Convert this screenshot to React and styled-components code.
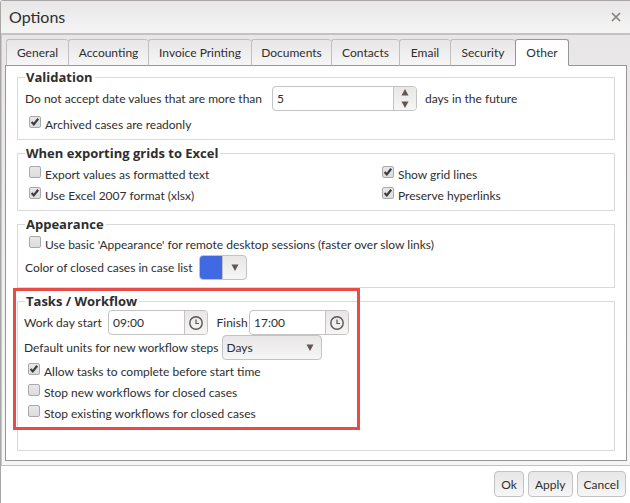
import React, { useState } from "react";
import styled, { createGlobalStyle } from "styled-components";

const tabs = [
  { name: "General", width: 62 },
  { name: "Accounting", width: 80 },
  { name: "Invoice Printing", width: 103 },
  { name: "Documents", width: 80 },
  { name: "Contacts", width: 68 },
  { name: "Email", width: 51 },
  { name: "Security", width: 65 },
  { name: "Other", width: 54 },
];

const Check = ({ label, checked }) => {
  const [on, setOn] = useState(!!checked);
  return (
    <CheckLabel>
      <CheckMark>
        <CheckInput
          type="checkbox"
          checked={on}
          onChange={(e) => setOn(e.target.checked)}
        />
        {on && (
          <svg width="12" height="12" viewBox="0 0 12 12" aria-hidden="true">
            <path d="M2.6 6 L4.8 8.4 L9.2 2.8" />
          </svg>
        )}
      </CheckMark>
      <span>{label}</span>
    </CheckLabel>
  );
};

const Arrow = ({ up }) => (
  <svg width="8" height="7" viewBox="0 0 8 7" fill="#645752" aria-hidden="true">
    <path d={up ? "M0.5 6.5 L4 0 L7.5 6.5 Z" : "M0.5 0.5 H7.5 L4 7 Z"} />
  </svg>
);

const Clock = () => (
  <svg width="16" height="16" viewBox="0 0 16 16" fill="none" aria-hidden="true">
    <circle cx="8" cy="8" r="6.2" stroke="#5c5350" strokeWidth="1.4" />
    <path d="M8 4.5 V8.5 H11" stroke="#5c5350" strokeWidth="1.2" />
  </svg>
);

const TimeField = ({ id, label, labelWidth, value }) => (
  <>
    <FieldLabel htmlFor={id} $width={labelWidth}>
      {label}
    </FieldLabel>
    <InputGroup $width={100}>
      <TextInput id={id} type="text" defaultValue={value} />
      <AddonButton type="button" aria-label={`Pick ${label} time`}>
        <Clock />
      </AddonButton>
    </InputGroup>
  </>
);

const App = () => {
  const [active, setActive] = useState("Other");
  const [days, setDays] = useState(5);
  return (
    <>
      <GlobalStyle />
      <Dialog role="dialog" aria-labelledby="dialog-title">
        <TitleBar>
          <Title id="dialog-title">Options</Title>
          <CloseButton type="button" aria-label="Close">
            <svg width="10" height="10" viewBox="0 0 10 10" aria-hidden="true">
              <path d="M1 1 L9 9 M9 1 L1 9" stroke="#86807d" strokeWidth="1.7" />
            </svg>
          </CloseButton>
        </TitleBar>
        <Body>
          <TabList role="tablist">
            {tabs.map((tab) => (
              <Tab
                key={tab.name}
                type="button"
                role="tab"
                aria-selected={active === tab.name}
                $active={active === tab.name}
                $width={tab.width}
                onClick={() => setActive(tab.name)}
              >
                {tab.name}
              </Tab>
            ))}
          </TabList>
          <Panel role="tabpanel">
            <Group>
              <Legend>Validation</Legend>
              <FieldRow>
                <FieldLabel htmlFor="days" $width={244}>
                  Do not accept date values that are more than
                </FieldLabel>
                <InputGroup $width={145}>
                  <TextInput
                    id="days"
                    type="text"
                    value={days}
                    onChange={(e) => setDays(e.target.value)}
                  />
                  <Spinner>
                    <SpinButton
                      type="button"
                      aria-label="Increase"
                      onClick={() => setDays(Number(days) + 1)}
                    >
                      <Arrow up />
                    </SpinButton>
                    <SpinButton
                      type="button"
                      aria-label="Decrease"
                      onClick={() => setDays(Number(days) - 1)}
                    >
                      <Arrow />
                    </SpinButton>
                  </Spinner>
                </InputGroup>
                <Suffix>days in the future</Suffix>
              </FieldRow>
              <CheckList $top={3}>
                <Check label="Archived cases are readonly" checked />
              </CheckList>
            </Group>

            <Group>
              <Legend>When exporting grids to Excel</Legend>
              <CheckGrid>
                <Check label="Export values as formatted text" />
                <Check label="Show grid lines" checked />
                <Check label="Use Excel 2007 format (xlsx)" checked />
                <Check label="Preserve hyperlinks" checked />
              </CheckGrid>
            </Group>

            <Group $bottom={7}>
              <Legend>Appearance</Legend>
              <CheckList $top={1}>
                <Check label="Use basic 'Appearance' for remote desktop sessions (faster over slow links)" />
              </CheckList>
              <FieldRow>
                <FieldLabel as="span" $width={171}>
                  Color of closed cases in case list
                </FieldLabel>
                <ColorButton type="button" aria-label="Color of closed cases">
                  <Swatch />
                  <ColorArrow>
                    <Arrow />
                  </ColorArrow>
                </ColorButton>
              </FieldRow>
            </Group>

            <Group $fill>
              <Legend>Tasks / Workflow</Legend>
              <Workflow>
                <FieldRow>
                  <TimeField
                    id="start"
                    label="Work day start"
                    labelWidth={81}
                    value="09:00"
                  />
                  <FieldGap />
                  <TimeField
                    id="finish"
                    label="Finish"
                    labelWidth={29}
                    value="17:00"
                  />
                </FieldRow>
                <FieldRow>
                  <FieldLabel htmlFor="units" $width={194}>
                    Default units for new workflow steps
                  </FieldLabel>
                  <SelectWrap>
                    <Select id="units" defaultValue="Days">
                      <option>Hours</option>
                      <option>Days</option>
                      <option>Weeks</option>
                    </Select>
                    <Arrow />
                  </SelectWrap>
                </FieldRow>
                <CheckList $top={1}>
                  <Check label="Allow tasks to complete before start time" checked />
                  <Check label="Stop new workflows for closed cases" />
                  <Check label="Stop existing workflows for closed cases" />
                </CheckList>
                <Highlight />
              </Workflow>
            </Group>
          </Panel>
        </Body>
        <Footer>
          <Button type="button">Ok</Button>
          <Button type="button">Apply</Button>
          <Button type="button">Cancel</Button>
        </Footer>
      </Dialog>
    </>
  );
};

const GlobalStyle = createGlobalStyle`
  * {
    box-sizing: border-box;
  }
  body {
    margin: 0;
    background: white;
    color: #2e2e2e;
    font: 12px/17px Lato, "Open Sans", sans-serif;
  }
  button, input, select {
    margin: 0;
    font: inherit;
    color: inherit;
  }
`;

const Dialog = styled.div`
  display: flex;
  flex-direction: column;
  min-height: 100vh;
  border-top: 1px solid #a9a6a7;
  border-left: 1px solid #a9a6a7;
  border-top-left-radius: 3px;
`;

const TitleBar = styled.header`
  display: flex;
  align-items: center;
  justify-content: space-between;
  height: 34px;
  padding: 0 8px;
  background: linear-gradient(#e8e6e7, #f5f5f5);
  border-bottom: 2px solid #c4c2c3;
`;

const Title = styled.h1`
  margin: 0;
  font-size: 16px;
  font-weight: normal;
  line-height: 22px;
`;

const CloseButton = styled.button`
  display: flex;
  padding: 1px;
  border: 0;
  background: none;
`;

const Body = styled.main`
  display: flex;
  flex-direction: column;
  flex: 1;
  padding: 4px 3px 4px 3px;
  background: linear-gradient(#e8e6e7, #f6f6f6);
  border-left: 1px solid #c9c7c8;
`;

const TabList = styled.div`
  display: flex;
  height: 27px;
  margin: 0 0 -1px 1px;
`;

const Tab = styled.button`
  width: ${(p) => p.$width}px;
  padding: 0;
  white-space: nowrap;
  color: #2e2e2e;
  background: ${(p) => (p.$active ? "white" : "linear-gradient(#e8e6e7, #f6f6f6)")};
  border: 1px solid ${(p) => (p.$active ? "#969696" : "#c0bebf")};
  border-bottom-color: ${(p) => (p.$active ? "white" : "#969696")};
  border-right-width: ${(p) => (p.$active ? 1 : 0)}px;
  border-radius: 3px 3px 0 0;
  position: relative;
`;

const Panel = styled.div`
  display: flex;
  flex-direction: column;
  flex: 1;
  gap: 4px;
  padding: 2px 11px 9px;
  background: white;
  border: 1px solid #969696;
`;

const Group = styled.fieldset`
  flex: ${(p) => (p.$fill ? "1" : "none")};
  min-width: 0;
  margin: 0;
  padding: 0 7px ${(p) => p.$bottom || 4}px;
  border: 1px solid #d9d9d9;
`;

const Legend = styled.legend`
  padding: 0 2px 0 1px;
  font: bold 13px/18px "Open Sans", Lato, sans-serif;
`;

const FieldRow = styled.div`
  display: flex;
  align-items: center;
  height: 25px;
`;

const FieldLabel = styled.label`
  min-width: ${(p) => p.$width}px;
  margin-right: 3px;
  white-space: nowrap;
`;

const FieldGap = styled.span`
  width: 9px;
`;

const Suffix = styled.span`
  margin-left: 8px;
`;

const InputGroup = styled.div`
  display: flex;
  flex: none;
  width: ${(p) => p.$width}px;
  height: 25px;
  overflow: hidden;
  background: white;
  border: 1px solid #c4c2c3;
  border-radius: 4px;
`;

const TextInput = styled.input`
  flex: 1;
  min-width: 0;
  padding: 0 4px;
  border: 0;
  outline: 0;
  background: none;
`;

const AddonButton = styled.button`
  display: flex;
  align-items: center;
  justify-content: center;
  width: 23px;
  padding: 0;
  border: 0;
  border-left: 1px solid #c4c2c3;
  background: linear-gradient(#e8e6e7, #f6f6f6);
`;

const Spinner = styled.div`
  display: flex;
  flex-direction: column;
  width: 23px;
  border-left: 1px solid #c4c2c3;
  background: linear-gradient(#e8e6e7, #f6f6f6);
`;

const SpinButton = styled.button`
  display: flex;
  flex: 1;
  align-items: center;
  justify-content: center;
  padding: 0;
  border: 0;
  background: none;
`;

const CheckList = styled.div`
  display: flex;
  flex-direction: column;
  padding: ${(p) => p.$top}px 0 0 4px;
`;

const CheckGrid = styled.div`
  display: grid;
  grid-template-columns: 353px auto;
  padding: 2px 0 0 4px;
`;

const CheckLabel = styled.label`
  display: flex;
  align-items: center;
  height: 21px;
  gap: 4px;
`;

const CheckMark = styled.span`
  display: grid;
  margin-bottom: 5px;
  svg {
    grid-area: 1 / 1;
    fill: none;
    stroke: #3c3c3c;
    stroke-width: 2.2;
    pointer-events: none;
  }
`;

const CheckInput = styled.input`
  grid-area: 1 / 1;
  appearance: none;
  width: 12px;
  height: 12px;
  background: linear-gradient(#e8e8e8, #dcdcdc);
  border: 1px solid #a9a9a9;
  border-radius: 2px;
`;

const ColorButton = styled.button`
  display: flex;
  width: 48px;
  height: 25px;
  padding: 0;
  overflow: hidden;
  border: 1px solid #c4c2c3;
  border-radius: 4px;
  background: linear-gradient(#e8e6e7, #f6f6f6);
`;

const Swatch = styled.span`
  width: 22px;
  background: #4169e1;
`;

const ColorArrow = styled.span`
  display: flex;
  flex: 1;
  align-items: center;
  justify-content: center;
  border-left: 1px solid #c4c2c3;
`;

const SelectWrap = styled.div`
  display: grid;
  width: 100px;
  height: 25px;
  svg {
    grid-area: 1 / 1;
    align-self: center;
    justify-self: end;
    margin-right: 8px;
    pointer-events: none;
  }
`;

const Select = styled.select`
  grid-area: 1 / 1;
  appearance: none;
  padding: 0 4px;
  border: 1px solid #c4c2c3;
  border-radius: 4px;
  background: linear-gradient(#e8e6e7, #f6f6f6);
`;

const Workflow = styled.div`
  position: relative;
  width: 325px;
  margin-left: -1px;
`;

const Highlight = styled.div`
  position: absolute;
  inset: -22px -11px -6px -11px;
  border: 3px solid #ea4a45;
  pointer-events: none;
`;

const Footer = styled.footer`
  display: flex;
  justify-content: flex-end;
  gap: 4px;
  padding: 5px 4px 6px;
  background: white;
  border-top: 1px solid #c4c2c3;
`;

const Button = styled.button`
  min-width: 30px;
  height: 26px;
  padding: 0 6px;
  color: #2e2e2e;
  background: linear-gradient(#e8e6e7, #f6f6f6);
  border: 1px solid #c4c2c3;
  border-radius: 4px;
`;

export default App;
